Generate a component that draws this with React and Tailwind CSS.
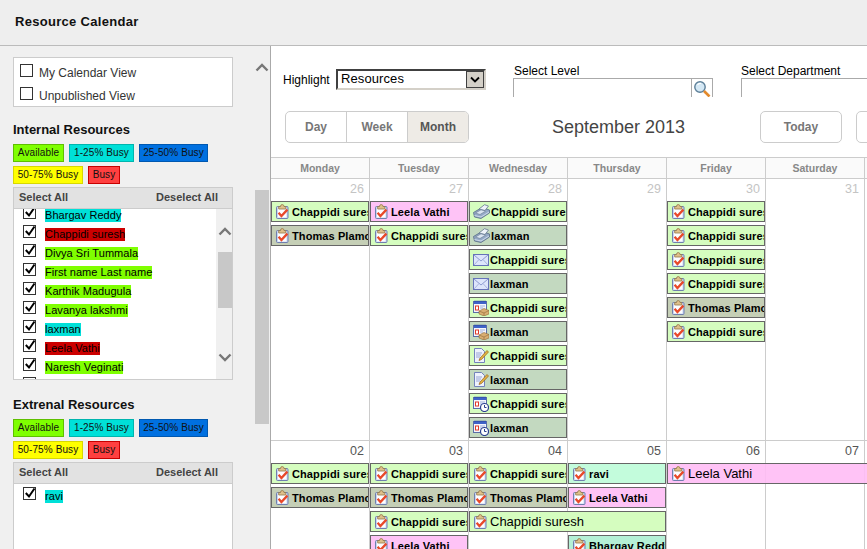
import React from "react";

const FONT = "font-['Liberation_Sans',Arial,sans-serif]";

const colStart = { 1: "col-start-1", 2: "col-start-2", 3: "col-start-3", 4: "col-start-4", 5: "col-start-5", 6: "col-start-6", 7: "col-start-7" };
const rowStart = { 1: "row-start-2", 2: "row-start-3", 3: "row-start-4", 4: "row-start-5", 5: "row-start-6", 6: "row-start-7", 7: "row-start-8", 8: "row-start-9", 9: "row-start-10", 10: "row-start-11" };

const eventColors = {
  green: "bg-[#d5fdbf]",
  thomas: "bg-[#c5cfb6]",
  laxman: "bg-[#c3d9c0]",
  pink: "bg-[#fec3f6]",
  pinkwide: "bg-[#ffbcf5]/90",
  ravi: "bg-[#c3fcdc]",
  bhargav: "bg-[#b5f0d6]",
};

const ClipIcon = () => (
  <svg width="13" height="15" viewBox="0 0 13 15" className="shrink-0">
    <rect x="0.5" y="2.5" width="11.5" height="12" rx="1" fill="#c9d6f2" stroke="#6f7fae" />
    <rect x="2" y="4" width="8.5" height="9.5" fill="#fdfdff" />
    <path d="M4.5 2.5 Q4.5 0.5 6.2 0.5 Q8 0.5 8 2.5 L9.8 2.5 L9.8 5 L2.7 5 L2.7 2.5 Z" fill="#dfc08a" stroke="#96794a" strokeWidth="0.8" />
    <path d="M2.6 8.8 L5.4 12 L11.4 5.6" fill="none" stroke="#e8492a" strokeWidth="2.3" />
  </svg>
);

const FaxIcon = () => (
  <svg width="17" height="15" viewBox="0 0 17 15" className="shrink-0">
    <path d="M0.5 8.5 L9 3.5 L16.5 6 L16.5 9 L8 14.5 L1.5 13 Z" fill="#94a9c6" stroke="#566a84" strokeWidth="0.8" />
    <path d="M6 5 L11.5 0.7 L15.5 2 L12 6.5 Z" fill="#eef3f9" stroke="#64788f" strokeWidth="0.8" />
    <path d="M2.5 9 L8 5.8 L12.5 7.2 L7 10.5 Z" fill="#dbe5f1" stroke="#64788f" strokeWidth="0.6" />
    <path d="M1.5 11.5 L8 13 L16 8" fill="none" stroke="#dbe5f1" strokeWidth="0.8" />
  </svg>
);

const MailIcon = () => (
  <svg width="16" height="12" viewBox="0 0 16 12" className="shrink-0">
    <rect x="0.5" y="0.5" width="15" height="11" fill="#dde5fb" stroke="#6673b8" />
    <path d="M1 1 L8 7 L15 1" fill="none" stroke="#8d9ad0" />
    <path d="M1 11 L6 5.5 M15 11 L10 5.5" fill="none" stroke="#a9b4de" />
  </svg>
);

const CalBase = () => (
  <>
    <rect x="0.5" y="1.5" width="13" height="11" fill="#f4f6fe" stroke="#5b6da6" />
    <rect x="1" y="1" width="12" height="3" fill="#3f63c8" />
    <path d="M2 0.5 V2 M4 0.5 V2 M6 0.5 V2 M8 0.5 V2 M10 0.5 V2 M12 0.5 V2" stroke="#28408a" strokeWidth="0.8" />
    <rect x="2.5" y="6" width="3" height="4" fill="#fff" stroke="#e03a2a" />
    <path d="M7 6 H12 M7 8 H10" stroke="#9fb0dc" />
  </>
);

const CalBoxIcon = () => (
  <svg width="16" height="16" viewBox="0 0 16 16" className="shrink-0">
    <CalBase />
    <path d="M6 11 L11 8.5 L16 10.5 L16 14 L11 16 L6 14 Z" fill="#d9ae72" stroke="#8f6a38" strokeWidth="0.6" />
    <path d="M6 11 L11 13 L16 10.5 M11 13 V16" fill="none" stroke="#8f6a38" strokeWidth="0.6" />
  </svg>
);

const CalClockIcon = () => (
  <svg width="16" height="16" viewBox="0 0 16 16" className="shrink-0">
    <CalBase />
    <circle cx="11.5" cy="11.5" r="4" fill="#fff" stroke="#2a3f8f" strokeWidth="1.2" />
    <path d="M11.5 9 V11.5 H13.5" fill="none" stroke="#2a3f8f" />
  </svg>
);

const NoteIcon = () => (
  <svg width="16" height="15" viewBox="0 0 16 15" className="shrink-0">
    <path d="M1.5 0.5 H8.5 L11.5 3.5 V14.5 H1.5 Z" fill="#eef2fd" stroke="#7383bb" />
    <path d="M3 5 H9 M3 7 H8 M3 9 H7" stroke="#97a5d4" />
    <path d="M6 12.5 L7 10 L14 2.5 L15.5 4 L8.5 11.5 Z" fill="#e3b341" stroke="#96621e" strokeWidth="0.7" />
  </svg>
);

const icons = { clip: ClipIcon, fax: FaxIcon, mail: MailIcon, calbox: CalBoxIcon, calclock: CalClockIcon, note: NoteIcon };

const Event = ({ col, row, name, color = "green", icon = "clip", span }) => {
  const Icon = icons[icon];
  return (
    <div
      className={`${colStart[col]} ${rowStart[row]} ${span === 2 ? "col-span-2 mr-px" : span === 3 ? "col-span-3 -mr-[4px]" : "mr-px"} ${eventColors[color]} relative z-10 h-[21px] border border-[#666] flex items-center overflow-hidden whitespace-nowrap ${icon === "clip" ? "pl-[4px] gap-[3px]" : "pl-[3px] gap-px"} ${span ? "text-[13px] font-normal" : "text-[11px] tracking-[0.1px] font-bold"} text-black`}
    >
      <Icon />
      <span className="pt-px">{name}</span>
    </div>
  );
};

const C = "Chappidi suresh";
const T = "Thomas Plamoottil";
const L = "Leela Vathi";

const week1 = [
  { col: 1, row: 1, name: C },
  { col: 1, row: 2, name: T, color: "thomas" },
  { col: 2, row: 1, name: L, color: "pink" },
  { col: 2, row: 2, name: C },
  { col: 3, row: 1, name: C, icon: "fax" },
  { col: 3, row: 2, name: "laxman", color: "laxman", icon: "fax" },
  { col: 3, row: 3, name: C, icon: "mail" },
  { col: 3, row: 4, name: "laxman", color: "laxman", icon: "mail" },
  { col: 3, row: 5, name: C, icon: "calbox" },
  { col: 3, row: 6, name: "laxman", color: "laxman", icon: "calbox" },
  { col: 3, row: 7, name: C, icon: "note" },
  { col: 3, row: 8, name: "laxman", color: "laxman", icon: "note" },
  { col: 3, row: 9, name: C, icon: "calclock" },
  { col: 3, row: 10, name: "laxman", color: "laxman", icon: "calclock" },
  { col: 5, row: 1, name: C },
  { col: 5, row: 2, name: C },
  { col: 5, row: 3, name: C },
  { col: 5, row: 4, name: C },
  { col: 5, row: 5, name: T, color: "thomas" },
  { col: 5, row: 6, name: C },
];

const week2 = [
  { col: 1, row: 1, name: C },
  { col: 1, row: 2, name: T, color: "thomas" },
  { col: 2, row: 1, name: C },
  { col: 2, row: 2, name: T, color: "thomas" },
  { col: 2, row: 3, name: C },
  { col: 2, row: 4, name: L, color: "pink" },
  { col: 3, row: 1, name: C },
  { col: 3, row: 2, name: T, color: "thomas" },
  { col: 3, row: 3, name: C, span: 2 },
  { col: 4, row: 1, name: "ravi", color: "ravi" },
  { col: 4, row: 2, name: L, color: "pink" },
  { col: 4, row: 4, name: "Bhargav Reddy", color: "bhargav" },
  { col: 5, row: 1, name: L, color: "pinkwide", span: 3 },
];

const Week = ({ days, muted, events }) => (
  <div className="grid grid-cols-[repeat(6,99px)_1fr] grid-rows-[22px_repeat(10,24px)]">
    {days.map((d, i) => (
      <div
        key={d}
        className={`${colStart[i + 1]} row-start-1 row-end-12 border-r border-b border-[#ccc] pr-[5px] pt-[3px] text-right text-[12.5px] leading-[14px] ${muted ? "text-[#c4c4c4]" : "text-[#555]"}`}
      >
        {d}
      </div>
    ))}
    <div className="col-start-7 row-start-1 row-end-12 border-b border-[#ccc]" />
    {events.map((e, i) => (
      <Event key={i} {...e} />
    ))}
  </div>
);

const Check = ({ checked }) => (
  <div className="relative w-[13px] h-[13px] shrink-0 bg-white border border-[#333]">
    {checked && (
      <svg width="13" height="13" viewBox="0 0 13 13" className="absolute left-0 top-[-1px]">
        <path d="M1.8 6 L5 9.5 L10.5 1.5" fill="none" stroke="#000" strokeWidth="2" />
      </svg>
    )}
  </div>
);

const Chevron = ({ up, className }) => (
  <svg width="14" height="9" viewBox="0 0 14 9" className={className}>
    <path d={up ? "M1.5 7.5 L7 2 L12.5 7.5" : "M1.5 1.5 L7 7 L12.5 1.5"} fill="none" stroke="#777" strokeWidth="2.4" />
  </svg>
);

const Legend = () => (
  <div className="mt-[6px] flex flex-wrap gap-x-[5px] gap-y-[4px] text-[10px] tracking-[0.1px] leading-[16px] text-center text-[#111]">
    <div className="w-[51px] h-[18px] bg-[#7fff00] border border-[#5fbf00]">Available</div>
    <div className="w-[65px] h-[18px] bg-[#00e0d8] border border-[#00b5ae]">1-25% Busy</div>
    <div className="w-[69px] h-[18px] bg-[#0070e0] border border-[#0058b0]">25-50% Busy</div>
    <div className="w-[70px] h-[18px] bg-[#ffff00] border border-[#d8d800]">50-75% Busy</div>
    <div className="w-[32px] h-[18px] bg-[#ff4040] border border-[#c80000]">Busy</div>
  </div>
);

const ListHeader = () => (
  <div className="h-[21px] border-b border-[#ccc] bg-[#e2e2e2] flex items-center justify-between pl-[5px] pr-[14px] pb-[2px] text-[11px] font-bold text-[#444]">
    <span>Select All</span>
    <span>Deselect All</span>
  </div>
);

const Resource = ({ name, color }) => (
  <div className="h-[19px] pl-[9px] flex items-start gap-[9px] text-[11px] tracking-[0.05px] leading-[13px] text-black">
    <Check checked />
    <span className={`mt-[3px] ${color}`}>{name}</span>
  </div>
);

const resources = [
  ["Bhargav Reddy", "bg-[#00e0d8]"],
  ["Chappidi suresh", "bg-[#cc0000]"],
  ["Divya Sri Tummala", "bg-[#7fff00]"],
  ["First name Last name", "bg-[#7fff00]"],
  ["Karthik Madugula", "bg-[#7fff00]"],
  ["Lavanya lakshmi", "bg-[#7fff00]"],
  ["laxman", "bg-[#00e0d8]"],
  ["Leela Vathi", "bg-[#cc0000]"],
  ["Naresh Veginati", "bg-[#7fff00]"],
];

const Sidebar = () => (
  <aside className="w-[271px] shrink-0 h-full flex border-r border-[#aaa] bg-[#f0f0f0] overflow-hidden">
    <div className="w-[255px] shrink-0 pl-[13px] pr-[22px] pt-[11px]">
      <div className="h-[50px] border border-[#ccc] bg-white pl-[6px] pt-[6px] text-[12px] leading-[14px] text-[#333]">
        <label className="flex items-center gap-[6px] h-[13px]">
          <Check />
          <span className="mt-[4px]">My Calendar View</span>
        </label>
        <label className="flex items-center gap-[6px] h-[13px] mt-[10px]">
          <Check />
          <span className="mt-[4px]">Unpublished View</span>
        </label>
      </div>

      <h3 className="mt-[15px] text-[13px] leading-[16px] font-bold text-[#111]">Internal Resources</h3>
      <Legend />
      <div className="mt-[3px] h-[193px] border border-[#ccc] bg-white flex flex-col">
        <ListHeader />
        <div className="flex flex-1 min-h-0">
          <div className="flex-1 overflow-hidden">
            <div className="-mt-[3px]">
              {resources.map(([n, c]) => (
                <Resource key={n} name={n} color={c} />
              ))}
              <div className="pl-[9px]">
                <Check />
              </div>
            </div>
          </div>
          <div className="w-[16px] shrink-0 bg-[#f0f0f0] flex flex-col items-center pl-px">
            <Chevron up className="mt-[18px]" />
            <div className="mt-[16px] w-[14px] h-[56px] bg-[#c8c8c8]" />
            <Chevron className="mt-[45px]" />
          </div>
        </div>
      </div>

      <h3 className="mt-[17px] text-[13px] leading-[16px] font-bold text-[#111]">Extrenal Resources</h3>
      <Legend />
      <div className="mt-[3px] h-[120px] border border-[#ccc] bg-white">
        <ListHeader />
        <div className="pt-[3px]">
          <Resource name="ravi" color="bg-[#00e0d8]" />
        </div>
      </div>
    </div>
    <div className="w-[14px] shrink-0 flex flex-col items-center">
      <Chevron up className="mt-[17px]" />
      <div className="mt-[118px] w-[14px] h-[234px] bg-[#c8c8c8]" />
    </div>
  </aside>
);

const Toolbar = () => (
  <div className="mt-[14px] h-[32px] flex items-stretch pl-[14px] text-[12px] font-bold text-[#777]">
    <div className="w-[184px] shrink-0 flex border border-[#ccc] rounded-[5px] overflow-hidden">
      <div className="w-[61px] flex items-center justify-center border-r border-[#ccc]">Day</div>
      <div className="w-[61px] flex items-center justify-center border-r border-[#ccc]">Week</div>
      <div className="flex-1 flex items-center justify-center bg-[#eeebe6] text-[#555]">Month</div>
    </div>
    <div className="ml-[83px] w-[133px] shrink-0 flex items-center whitespace-nowrap text-[18px] font-normal text-[#444]">September 2013</div>
    <div className="ml-[75px] w-[82px] shrink-0 flex items-center justify-center border border-[#ccc] rounded-[5px]">Today</div>
    <div className="ml-[14px] w-[60px] shrink-0 border border-[#ccc] rounded-[5px]" />
  </div>
);

const Filters = () => (
  <div className="h-[51px] flex overflow-hidden pl-[12px] text-[12px] leading-[14px] text-black">
    <span className="mt-[27px] w-[53px] shrink-0">Highlight</span>
    <div className="mt-[23px] w-[150px] h-[21px] shrink-0 border-t-2 border-l-2 border-t-[#404040] border-l-[#404040] border-b-2 border-r-2 border-b-[#d4d0c8] border-r-[#d4d0c8] bg-white flex items-center justify-between pl-[3px]">
      <span className="text-[13px] tracking-[0.1px] -mt-[2px]">Resources</span>
      <div className="w-[18px] h-[17px] bg-[#d4d0c8] border border-[#404040] flex items-center justify-center">
        <svg width="10" height="7" viewBox="0 0 10 7">
          <path d="M1 1.5 L5 5.5 L9 1.5" fill="none" stroke="#000" strokeWidth="1.8" />
        </svg>
      </div>
    </div>
    <div className="ml-[27px] mt-[18px] w-[200px] shrink-0">
      <div className="pl-px">Select Level</div>
      <div className="h-[30px] border border-[#aaa] flex justify-end">
        <div className="w-[21px] border-l border-[#aaa] flex items-start justify-center pt-px">
          <svg width="18" height="18" viewBox="0 0 18 18">
            <circle cx="7" cy="7" r="5.2" fill="#d4e8f5" stroke="#5c7f98" strokeWidth="1.4" />
            <path d="M4.5 5 A3.5 3.5 0 0 1 8 3.5" fill="none" stroke="#fff" strokeWidth="1.2" />
            <path d="M11 11 L16.5 16.5" stroke="#e38a2c" strokeWidth="2.6" />
          </svg>
        </div>
      </div>
    </div>
    <div className="ml-[28px] mt-[18px] w-[200px] shrink-0">
      <div>Select Department</div>
      <div className="h-[30px] border border-[#aaa]" />
    </div>
  </div>
);

const weekdays = ["Monday", "Tuesday", "Wednesday", "Thursday", "Friday", "Saturday"];

export default function App() {
  return (
    <div className={`${FONT} w-[867px] h-[549px] overflow-hidden flex flex-col bg-white`}>
      <header className="h-[46px] shrink-0 bg-[#eeeeee] border-b border-[#bbb] pl-[15px] pb-px flex items-center text-[13px] font-bold tracking-[0.3px] text-[#111]">
        Resource Calendar
      </header>
      <div className="flex flex-1 min-h-0">
        <Sidebar />
        <main className="flex-1 min-w-0 overflow-hidden">
          <Filters />
          <Toolbar />
          <div className="mt-[14px] h-[22px] flex border-y border-[#ccc] bg-[#fafafa] text-[10.5px] font-bold text-[#888]">
            {weekdays.map((d) => (
              <div key={d} className="w-[99px] shrink-0 border-r border-[#ccc] flex items-center justify-center pt-px">
                {d}
              </div>
            ))}
          </div>
          <Week days={["26", "27", "28", "29", "30", "31"]} muted events={week1} />
          <Week days={["02", "03", "04", "05", "06", "07"]} events={week2} />
        </main>
      </div>
    </div>
  );
}
